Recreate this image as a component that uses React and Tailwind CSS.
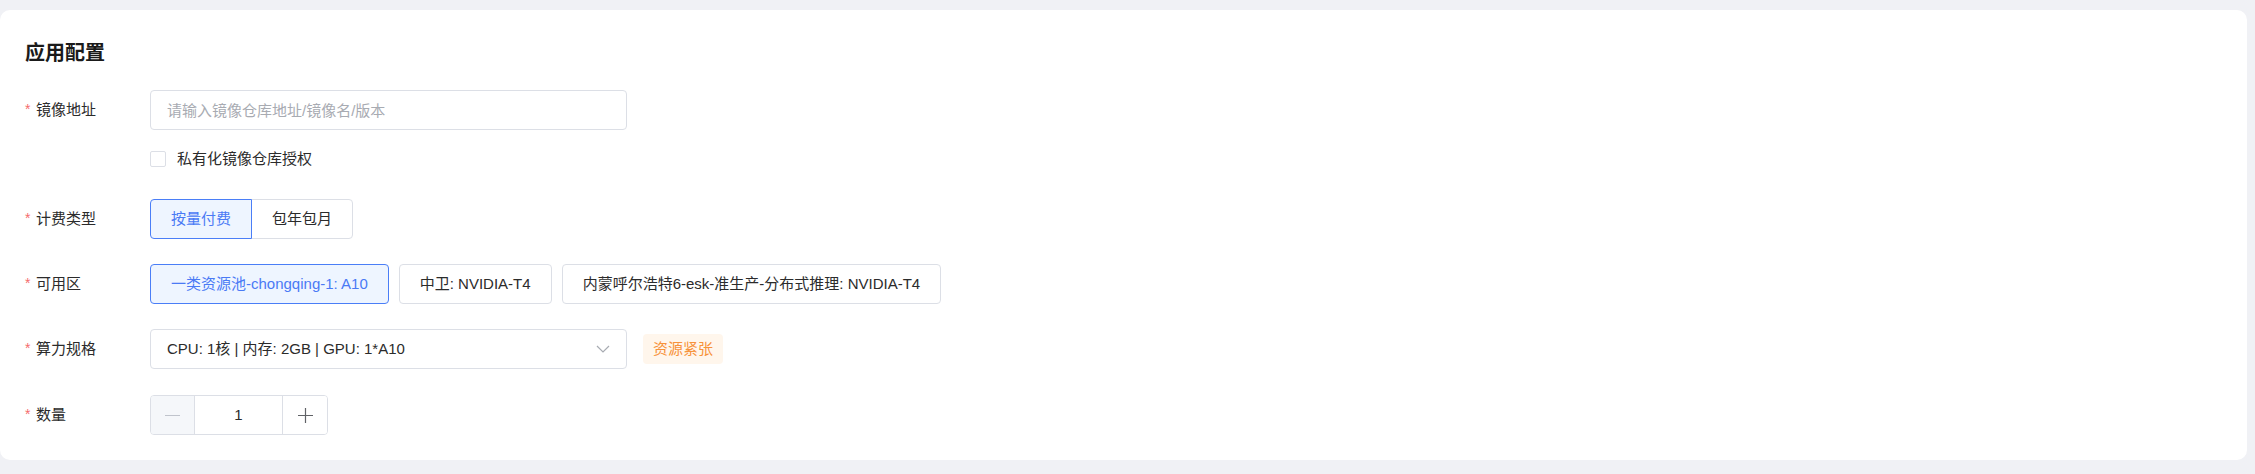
import React, { useState } from "react";

const font = { fontFamily: '"Liberation Sans", "Noto Sans CJK SC", sans-serif' };

const Label = ({ children }) => (
  <div className="w-[125px] shrink-0 flex items-center text-[15px] text-[#2b2b2b]">
    <span className="w-[11px] text-[14px] text-[#f56c6c] leading-none -mt-[3px]">*</span>
    <span>{children}</span>
  </div>
);

const zones = [
  "一类资源池-chongqing-1: A10",
  "中卫: NVIDIA-T4",
  "内蒙呼尔浩特6-esk-准生产-分布式推理: NVIDIA-T4",
];

export default function App() {
  const [billing, setBilling] = useState(0);
  const [zone, setZone] = useState(0);
  const [count, setCount] = useState(1);
  const [checked, setChecked] = useState(false);

  return (
    <div className="min-h-screen bg-[#f0f1f5] pt-[10px] pr-[8px] pb-[14px]" style={font}>
      <div className="bg-white rounded-[10px] h-[450px] pl-[25px] pt-[29px]">
        <h2 className="text-[20px] leading-[28px] font-bold text-[#1a1a1a]">应用配置</h2>

        {/* 镜像地址 */}
        <div className="flex items-center mt-[23px]">
          <Label>镜像地址</Label>
          <input
            placeholder="请输入镜像仓库地址/镜像名/版本"
            className="w-[477px] h-[40px] border border-[#dcdfe6] rounded-[4px] px-[16px] text-[15px] text-[#333] placeholder:text-[#a8abb2] outline-none"
          />
        </div>

        <div className="flex items-center mt-[21px] ml-[125px] h-[16px]">
          <span
            onClick={() => setChecked((v) => !v)}
            className="w-[16px] h-[16px] border border-[#dcdfe6] rounded-[2px] bg-white cursor-pointer"
          />
          <span className="ml-[11px] text-[15px] text-[#2b2b2b]">私有化镜像仓库授权</span>
        </div>

        {/* 计费类型 */}
        <div className="flex items-center mt-[32px]">
          <Label>计费类型</Label>
          <div className="flex">
            {["按量付费", "包年包月"].map((t, i) => (
              <button
                key={t}
                onClick={() => setBilling(i)}
                className={
                  "h-[40px] px-[20px] text-[15px] border " +
                  (i === 0 ? "rounded-l-[4px] " : "rounded-r-[4px] -ml-px ") +
                  (billing === i
                    ? "relative z-10 border-[#4a7ef7] bg-[#eef5ff] text-[#4a7af5]"
                    : "border-[#dcdfe6] bg-white text-[#2b2b2b]")
                }
              >
                {t}
              </button>
            ))}
          </div>
        </div>

        {/* 可用区 */}
        <div className="flex items-center mt-[25px]">
          <Label>可用区</Label>
          <div className="flex gap-[10px]">
            {zones.map((z, i) => (
              <button
                key={z}
                onClick={() => setZone(i)}
                className={
                  "h-[40px] px-[20px] text-[15px] border rounded-[4px] " +
                  (zone === i
                    ? "border-[#4a7ef7] bg-[#eef5ff] text-[#4a7af5]"
                    : "border-[#dcdfe6] bg-white text-[#2b2b2b]")
                }
              >
                {z}
              </button>
            ))}
          </div>
        </div>

        {/* 算力规格 */}
        <div className="flex items-center mt-[25px]">
          <Label>算力规格</Label>
          <div className="w-[477px] h-[40px] border border-[#dcdfe6] rounded-[4px] pl-[16px] pr-[16px] flex items-center justify-between text-[15px] text-[#2b2b2b]">
            <span>CPU: 1核 | 内存: 2GB | GPU: 1*A10</span>
            <svg width="14" height="8" viewBox="0 0 14 8" fill="none">
              <polyline points="1,1 7,7 13,1" stroke="#a8abb2" strokeWidth="1.2" />
            </svg>
          </div>
          <span className="ml-[16px] h-[30px] px-[10px] flex items-center rounded-[4px] bg-[#fff6ec] text-[15px] text-[#f7923a]">
            资源紧张
          </span>
        </div>

        {/* 数量 */}
        <div className="flex items-center mt-[26px]">
          <Label>数量</Label>
          <div className="flex h-[40px] border border-[#dcdfe6] rounded-[4px] overflow-hidden">
            <button
              onClick={() => setCount((c) => Math.max(1, c - 1))}
              className="w-[44px] bg-[#f5f7fa] flex items-center justify-center border-r border-[#dcdfe6]"
            >
              <span className="w-[15px] h-px bg-[#c0c4cc]" />
            </button>
            <div className="w-[87px] flex items-center justify-center text-[15px] text-[#2b2b2b]">{count}</div>
            <button
              onClick={() => setCount((c) => c + 1)}
              className="w-[45px] bg-white flex items-center justify-center border-l border-[#dcdfe6]"
            >
              <svg width="15" height="15" viewBox="0 0 15 15">
                <path d="M7.5 0v15M0 7.5h15" stroke="#606266" strokeWidth="1.2" />
              </svg>
            </button>
          </div>
        </div>
      </div>
    </div>
  );
}
